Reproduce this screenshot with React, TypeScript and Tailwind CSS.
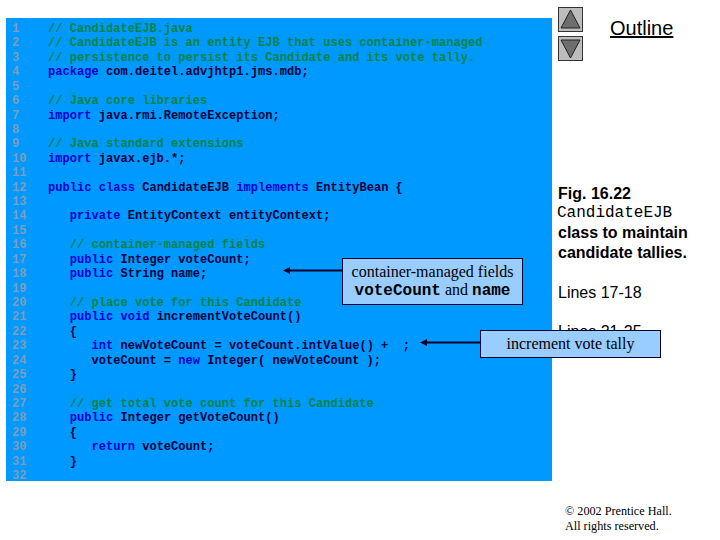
type Kind = "c" | "k" | "n";
type Seg = [Kind, string];

const kindClass: Record<Kind, string> = {
  c: "text-[#07843f]",
  k: "text-[#0000cc]",
  n: "text-[#00003c]",
};

const code: Seg[][] = [
  [["c", "// CandidateEJB.java"]],
  [["c", "// CandidateEJB is an entity EJB that uses container-managed"]],
  [["c", "// persistence to persist its Candidate and its vote tally."]],
  [["k", "package"], ["n", " com.deitel.advjhtp1.jms.mdb;"]],
  [],
  [["c", "// Java core libraries"]],
  [["k", "import"], ["n", " java.rmi.RemoteException;"]],
  [],
  [["c", "// Java standard extensions"]],
  [["k", "import"], ["n", " javax.ejb.*;"]],
  [],
  [["k", "public class"], ["n", " CandidateEJB "], ["k", "implements"], ["n", " EntityBean {"]],
  [],
  [["n", "   "], ["k", "private"], ["n", " EntityContext entityContext;"]],
  [],
  [["c", "   // container-managed fields"]],
  [["n", "   "], ["k", "public"], ["n", " Integer voteCount;"]],
  [["n", "   "], ["k", "public"], ["n", " String name;"]],
  [],
  [["c", "   // place vote for this Candidate"]],
  [["n", "   "], ["k", "public void"], ["n", " incrementVoteCount()"]],
  [["n", "   {"]],
  [["n", "      "], ["k", "int"], ["n", " newVoteCount = voteCount.intValue() +  ;"]],
  [["n", "      voteCount = "], ["k", "new"], ["n", " Integer( newVoteCount );"]],
  [["n", "   }"]],
  [],
  [["c", "   // get total vote count for this Candidate"]],
  [["n", "   "], ["k", "public"], ["n", " Integer getVoteCount()"]],
  [["n", "   {"]],
  [["n", "      "], ["k", "return"], ["n", " voteCount;"]],
  [["n", "   }"]],
  [],
];

function ArrowButton({ down }: { down?: boolean }) {
  return (
    <div className="h-[25px] w-[25px] border border-[#333] bg-[#bdbdbd]">
      <svg viewBox="0 0 23 23" className="h-full w-full">
        <polygon
          points={down ? "2,3 21,3 11.5,21" : "11.5,2 21,20 2,20"}
          fill="#6e6e6e"
          stroke="#222"
          strokeWidth="1"
        />
      </svg>
    </div>
  );
}

function Pointer({ width }: { width: number }) {
  return (
    <svg width={width} height="9" className="block">
      <line x1="5" y1="4.5" x2={width} y2="4.5" stroke="#00002c" strokeWidth="2" />
      <polygon points="0,4.5 7,1 7,8" fill="#00002c" />
    </svg>
  );
}

export default function App() {
  return (
    <div className="relative flex h-[540px] w-[720px] overflow-hidden bg-white font-['Liberation_Sans',sans-serif] text-black">
      <div className="mt-[18px] ml-[6px] h-[463px] w-[546px] bg-[#0099ff] pt-[4px] pl-[6px] font-['Liberation_Mono',monospace] text-[12px] leading-[14.43px] font-bold tracking-[0.04px] whitespace-pre">
        {code.map((segs, i) => (
          <div key={i} className="flex h-[14.43px]">
            <span className="w-[36px] shrink-0 text-[#7f9dba]">{i + 1}</span>
            <span>
              {segs.map(([kind, text], j) => (
                <span key={j} className={kindClass[kind]}>
                  {text}
                </span>
              ))}
            </span>
          </div>
        ))}
      </div>

      <div className="ml-[6px] flex w-[162px] flex-col">
        <div className="mt-[7px] flex items-start">
          <div className="flex flex-col gap-[4px]">
            <ArrowButton />
            <ArrowButton down />
          </div>
          <span className="mt-[10px] ml-[27px] text-[20px] leading-[23px] underline">Outline</span>
        </div>
        <div className="mt-[123px] text-[16px] leading-[19.7px] font-bold">
          <div>Fig. 16.22</div>
          <div className="-ml-px font-['Liberation_Mono',monospace] text-[16px] font-normal">CandidateEJB</div>
          <div>class to maintain</div>
          <div>candidate tallies.</div>
        </div>
        <div className="mt-[20px] text-[16px] leading-[20px]">Lines 17-18</div>
        <div className="mt-[19px] text-[16px] leading-[20px]">Lines 21-25</div>
        <div className="mt-[162px] ml-[7px] font-['Liberation_Serif',serif] text-[12.2px] leading-[15px]">
          <div>© 2002 Prentice Hall.</div>
          <div>All rights reserved.</div>
        </div>
      </div>

      <div className="absolute top-[258px] left-[283px] flex items-start">
        <div className="mt-[8px]">
          <Pointer width={59} />
        </div>
        <div className="flex h-[47px] w-[181px] flex-col items-center justify-center border border-[#00002c] bg-[#99ccff] font-['Liberation_Serif',serif] text-[16px] leading-[18px]">
          <div>container-managed fields</div>
          <div>
            <span className="font-['Liberation_Mono',monospace] font-bold">voteCount</span> and{" "}
            <span className="font-['Liberation_Mono',monospace] font-bold">name</span>
          </div>
        </div>
      </div>

      <div className="absolute top-[330px] left-[420px] flex items-start">
        <div className="mt-[8px]">
          <Pointer width={60} />
        </div>
        <div className="flex h-[28px] w-[181px] items-center justify-center border border-[#00002c] bg-[#99ccff] font-['Liberation_Serif',serif] text-[16px]">
          increment vote tally
        </div>
      </div>
    </div>
  );
}
